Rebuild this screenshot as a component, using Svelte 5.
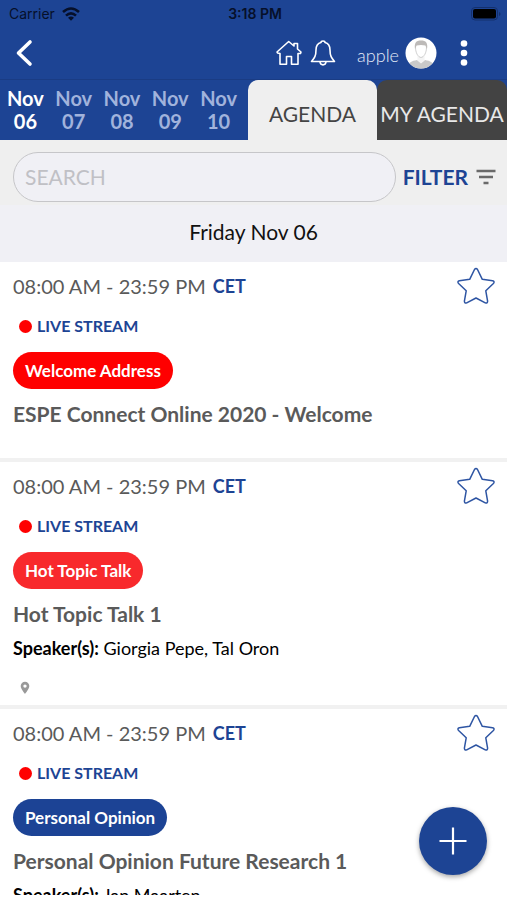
<script lang="ts">
  const days = ['06', '07', '08', '09', '10'];
  let selectedDay = $state('06');
  let search = $state('');

  const sessions = [
    { badge: 'Welcome Address', color: '#ff0000', title: 'ESPE Connect Online 2020 - Welcome', speakers: '', place: false },
    { badge: 'Hot Topic Talk', color: '#f8292c', title: 'Hot Topic Talk 1', speakers: 'Giorgia Pepe, Tal Oron', place: true },
    { badge: 'Personal Opinion', color: '#1c4395', title: 'Personal Opinion Future Research 1', speakers: 'Jan Maarten', place: true },
  ];
</script>

<div class="app">
  <header>
    <div class="status">
      <span class="carrier">
        Carrier
        <svg width="18" height="14" viewBox="0 0 18 14" fill="none" stroke="#06102a" stroke-width="2.600">
          <path d="M1 5Q9-2 17 5" />
          <path d="M4 8.600Q9 4 14 8.600" />
          <path d="M9 13.800L6 10.800Q9 8.400 12 10.800Z" fill="#06102a" stroke="none" />
        </svg>
      </span>
      <span class="clock">3:18 PM</span>
      <svg class="battery" width="30" height="14" viewBox="0 0 30 14">
        <rect x="0.5" y="0.5" width="26" height="12.500" rx="3.500" fill="none" stroke="#14306d" />
        <rect x="2" y="2" width="23" height="9.500" rx="2" fill="#000" />
        <path d="M28 5v4q1.500-.5 1.500-2T28 5z" fill="#14306d" />
      </svg>
    </div>
    <div class="toolbar">
      <button class="icon back" aria-label="Back">
        <svg width="18" height="28" viewBox="0 0 18 28" fill="none" stroke="#fff" stroke-width="3.600" stroke-linecap="round" stroke-linejoin="round">
          <path d="M15 3L3.500 14L15 25" />
        </svg>
      </button>
      <button class="icon" aria-label="Home">
        <svg width="26" height="26" viewBox="0 0 26 26" fill="none" stroke="#fff" stroke-width="1.600" stroke-linejoin="round">
          <path d="M4 13.500L1.500 13L1 12L12.700 1.500L18 6V3.500H21.500V9L25 12L24.500 13.500H22V24.300H15.500V16.500H10.500V24.300H4Z" />
        </svg>
      </button>
      <button class="icon bell" aria-label="Notifications">
        <svg width="26" height="26" viewBox="0 0 26 26" fill="none" stroke="#fff" stroke-width="1.600" stroke-linejoin="round">
          <path d="M11 2.500C11 .5 15 .5 15 2.500C19 3.500 20 7 20 10C20 16 21.500 18 24.500 21.500H1.500C4.500 18 6 16 6 10C6 7 7 3.500 11 2.500Z" />
          <path d="M10 22C10.500 25.800 15.500 25.800 16 22" />
        </svg>
      </button>
      <span class="user">apple</span>
      <svg class="avatar" width="32" height="32" viewBox="0 0 32 32">
        <defs><clipPath id="face"><circle cx="16" cy="16" r="15.500" /></clipPath></defs>
        <circle cx="16" cy="16" r="15.500" fill="#fff" />
        <g clip-path="url(#face)">
          <path d="M2 32C3 25 7 24 12 23L16 26L20 23C25 24 29 25 30 32Z" fill="#c9c9c9" />
          <path d="M12.500 19V23.500L16 26.500L19.500 23.500V19Z" fill="#f4f4f4" />
          <path d="M10.500 10C10.500 2.500 21.500 2.500 21.500 10C21.500 16 19 20 16 20.500C13 20 10.500 16 10.500 10Z" fill="#fff" stroke="#c4c4c4" stroke-width=".8" />
          <path d="M10 12C9 6 11 3.500 16 3.500C21 3.500 23 6 22 12L20.500 8.500Q16 7.500 11.500 8.500Z" fill="#bdbab8" />
        </g>
      </svg>
      <button class="icon more" aria-label="More options">
        <svg width="8" height="26" viewBox="0 0 8 26" fill="#fff">
          <circle cx="4" cy="3.500" r="3.300" /><circle cx="4" cy="13" r="3.300" /><circle cx="4" cy="22.500" r="3.300" />
        </svg>
      </button>
    </div>
    <nav>
      <div class="days">
        {#each days as day}
          <button class="day" class:selected={selectedDay === day} onclick={() => (selectedDay = day)}>Nov<br />{day}</button>
        {/each}
      </div>
      <button class="tab">AGENDA</button>
      <button class="tab dark">MY AGENDA</button>
    </nav>
  </header>

  <form class="search" onsubmit={(e) => e.preventDefault()}>
    <input type="text" placeholder="SEARCH" aria-label="Search" bind:value={search} />
    <button class="filter" type="button">
      FILTER
      <svg width="20" height="16" viewBox="0 0 20 16" stroke="#6a6a6a" stroke-width="2.400">
        <path d="M.5 2H19.500M3 8H17M7.500 14H12.500" />
      </svg>
    </button>
  </form>
  <h2>Friday Nov 06</h2>

  <main>
    {#each sessions as s}
      <article>
        <div class="when">
          <span>08:00 AM - 23:59 PM</span>
          <strong>CET</strong>
          <button class="icon star" aria-label="Add to favourites">
            <svg width="38" height="38" viewBox="0 0 38 38" fill="none" stroke="#2e55a3" stroke-width="1.500" stroke-linejoin="round">
              <path d="M17.500 2.500Q19 .5 20.500 2.500L25.300 12.300L35.600 13.800Q38 14.500 36.400 16.500L28.800 23.800L30.600 34.200Q30.500 36.600 28.300 35.900L19 31L9.700 35.900Q7.500 36.600 7.400 34.200L9.200 23.800L1.600 16.500Q0 14.500 2.400 13.800L12.700 12.300Z" />
            </svg>
          </button>
        </div>
        <div class="live"><span class="dot"></span>LIVE STREAM</div>
        <span class="badge" style:background={s.color}>{s.badge}</span>
        <h3>{s.title}</h3>
        {#if s.speakers}
          <p><b>Speaker(s):</b> {s.speakers}</p>
        {/if}
        {#if s.place}
          <div class="place">
            <svg width="10" height="14" viewBox="0 0 10 14" fill="#999">
              <path fill-rule="evenodd" d="M5 .8A4.300 4.300 0 0 0 .7 5.100C.7 8 5 13 5 13S9.300 8 9.300 5.100A4.300 4.300 0 0 0 5 .8ZM5 3.400A1.700 1.700 0 1 1 5 6.800A1.700 1.700 0 1 1 5 3.400Z" />
            </svg>
          </div>
        {/if}
      </article>
    {/each}
  </main>

  <button class="fab" aria-label="Add">
    <svg width="28" height="28" viewBox="0 0 28 28" stroke="#fff" stroke-width="2.200"><path d="M14 .5V27.500M.5 14H27.500" /></svg>
  </button>
</div>

<style>
  :global(body) {
    background: #fff;
  }
  .app {
    box-sizing: border-box;
    height: calc(100vh - 5px);
    display: flex;
    flex-direction: column;
    overflow: hidden;
    font-family: Lato, sans-serif;
    color: #111;
  }
  button {
    border: 0;
    padding: 0;
    margin: 0;
    background: none;
    font: inherit;
    color: inherit;
    cursor: pointer;
  }
  svg {
    display: block;
    flex: none;
  }
  header {
    flex: none;
    background: #1d4494;
  }
  .status {
    display: grid;
    grid-template-columns: 1fr auto 1fr;
    align-items: center;
    height: 27px;
    padding: 0 6px 0 9px;
    font: 14px Inter, sans-serif;
    color: #06102a;
  }
  .carrier {
    display: flex;
    align-items: center;
    gap: 7px;
  }
  .clock {
    font-weight: 600;
  }
  .battery {
    justify-self: end;
  }
  .toolbar {
    display: flex;
    align-items: center;
    height: 52px;
    padding: 0 39px 0 15px;
  }
  .back {
    margin-right: auto;
  }
  .bell {
    margin-left: 8px;
  }
  .user {
    margin: 4px 6px 0 21px;
    font-size: 18px;
    line-height: 24px;
    font-weight: 300;
    color: #e4ebf8;
  }
  .more {
    margin-left: 23px;
  }
  nav {
    display: grid;
    grid-template-columns: 248fr 129fr 130fr;
    height: 61px;
    border-top: 1px solid #1a3c84;
    box-sizing: border-box;
  }
  .days {
    min-width: 0;
    display: flex;
    justify-content: space-between;
    padding: 0 11px 0 7px;
  }
  .day {
    font-size: 20px;
    line-height: 23px;
    font-weight: 700;
    color: #a1b3dc;
  }
  .day.selected {
    color: #fff;
  }
  .tab {
    min-width: 0;
    border-radius: 10px 10px 0 0;
    background: #efefef;
    color: #444;
    font-size: 21px;
    padding-top: 6px;
    white-space: nowrap;
  }
  .tab.dark {
    background: #434343;
    color: #e8e8e8;
  }
  .search {
    flex: none;
    display: flex;
    align-items: center;
    gap: 7px;
    padding: 12px 11px 3px 13px;
    background: #efefef;
  }
  input {
    flex: 1;
    min-width: 0;
    box-sizing: border-box;
    height: 50px;
    padding: 0 11px 2px;
    border: 1px solid #c6c6c9;
    border-radius: 25px;
    background: #f0f0f5;
    font: 21px Lato, sans-serif;
    color: #444;
    outline: none;
  }
  input::placeholder {
    color: #c0c0c5;
    opacity: 1;
  }
  .filter {
    display: flex;
    align-items: center;
    gap: 8px;
    font-size: 21px;
    line-height: 24px;
    font-weight: 700;
    color: #1d4494;
  }
  h2 {
    flex: none;
    margin: 0;
    padding: 12px 0 15px;
    background: #f0f0f5;
    font-size: 21px;
    line-height: 30px;
    font-weight: 400;
    text-align: center;
  }
  main {
    flex: 1;
    min-height: 0;
    overflow: hidden;
  }
  article {
    box-sizing: border-box;
    min-height: 200px;
    padding: 0 12px 2px 13px;
    border-bottom: 4px solid #f1f1f1;
  }
  .when {
    display: flex;
    align-items: center;
    gap: 7px;
    height: 48px;
    font-size: 20px;
    line-height: 24px;
    color: #5a5a5a;
  }
  strong {
    font-size: 18px;
    color: #1d4494;
  }
  .star {
    margin-left: auto;
  }
  .live {
    display: flex;
    align-items: center;
    gap: 5px;
    height: 32px;
    padding-left: 6px;
    font-size: 16px;
    line-height: 18px;
    font-weight: 700;
    color: #1d4494;
  }
  .dot {
    width: 13px;
    height: 13px;
    border-radius: 50%;
    background: #f00;
  }
  .badge {
    display: block;
    width: fit-content;
    margin-top: 10px;
    padding: 0 12px;
    border-radius: 19px;
    font-size: 17px;
    line-height: 37px;
    font-weight: 700;
    color: #fff;
  }
  h3 {
    margin: 11px 0 0;
    font-size: 21px;
    line-height: 28px;
    font-weight: 700;
    color: #5a5a5a;
  }
  p {
    margin: 8px 0 0;
    font-size: 18px;
    line-height: 24px;
    color: #000;
  }
  .place {
    display: flex;
    align-items: center;
    height: 30px;
    margin-top: 13px;
    padding-left: 7px;
  }
  .fab {
    position: fixed;
    right: 20px;
    bottom: 25px;
    width: 68px;
    height: 68px;
    display: grid;
    place-items: center;
    border-radius: 50%;
    background: #1d4494;
    box-shadow: 0 2px 5px rgba(0, 0, 0, 0.35);
  }
</style>
